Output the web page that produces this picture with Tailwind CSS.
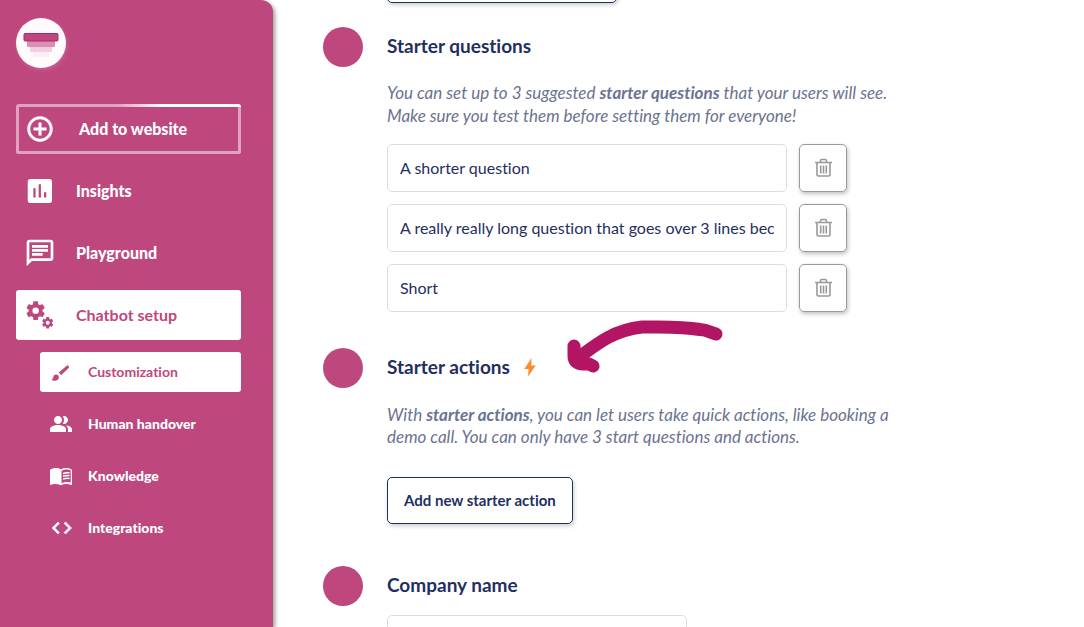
<!DOCTYPE html>
<html lang="en">
<head>
<meta charset="utf-8">
<meta name="viewport" content="width=device-width, initial-scale=1">
<title>Chatbot setup</title>
<script src="https://cdn.jsdelivr.net/npm/@tailwindcss/browser@4"></script>
</head>
<body class="bg-white font-['Lato',sans-serif] text-base text-[#1f2f5f] [font-variant-ligatures:none]">
<div class="flex h-screen overflow-hidden">
  <aside class="w-[273px] shrink-0 rounded-tr-xl bg-[#be477e] pt-[18px] pr-8 pl-4 text-white shadow-[2px_2px_4px_rgba(0,0,0,0.4)]">
    <a href="#" aria-label="Home" class="flex size-[50px] items-center justify-center rounded-full bg-[#fffafc] shadow-[1px_2px_4px_rgba(255,255,255,0.15)]">
      <svg class="size-[50px]" viewBox="0 0 50 50"><rect x="17" y="34" width="16" height="5" fill="#fceef5"/><rect x="14" y="28" width="22" height="6" rx="1" fill="#f0d0e0"/><rect x="11" y="22" width="28" height="7" rx="1" fill="#d990b4"/><rect x="8" y="15.500" width="34" height="7.500" rx="1" fill="#be477e" stroke="#b5256d"/></svg>
    </a>
    <nav class="mt-9 flex flex-col gap-3 font-black">
      <a href="#" class="rounded-[3px] bg-linear-to-r from-[#dfa3bf] from-45% via-white via-65% to-white p-[3px]">
        <span class="relative flex h-11 items-center bg-[#be477e] pl-1.5">
          <span class="absolute -inset-x-[3px] top-0 -bottom-[3px] rounded-b-[3px] border-x-3 border-b-3 border-[#dfa3bf]"></span>
          <svg class="size-[30px] fill-white stroke-white" stroke-width=".4" viewBox="0 0 24 24"><path d="M13 7h-2v4H7v2h4v4h2v-4h4v-2h-4V7zm-1-5C6.480 2 2 6.480 2 12s4.480 10 10 10 10-4.480 10-10S17.520 2 12 2zm0 18c-4.410 0-8-3.590-8-8s3.590-8 8-8 8 3.590 8 8-3.590 8-8 8z"/></svg>
          <span class="ml-6">Add to website</span>
        </span>
      </a>
      <a href="#" class="flex h-[50px] items-center gap-5 pl-2">
        <svg class="size-8 fill-white" viewBox="0 0 24 24"><path d="M19.200 3H4.800C3.600 3 2.800 3.800 2.800 4.800v14.400c0 1 .8 1.800 1.800 1.800h14.600c1 0 1.800-.8 1.800-1.800V4.800C21 3.800 20.200 3 19.200 3zM8.700 16.900H7V10h1.700v6.900zm4 0H11V7h1.700v9.900zm4 0H15V13h1.700v3.900z"/></svg>
        <span>Insights</span>
      </a>
      <a href="#" class="flex h-[50px] items-center gap-5 pl-2">
        <svg class="size-8 fill-white" viewBox="0 0 24 24"><path d="M4 4h16v12H5.170L4 17.170V4m0-2c-1.100 0-1.990.9-1.990 2L2 22l4-4h14c1.100 0 2-.9 2-2V4c0-1.100-.9-2-2-2H4zm2 10h8v2H6v-2zm0-3h12v2H6V9zm0-3h12v2H6V6z"/></svg>
        <span>Playground</span>
      </a>
      <a href="#" aria-current="true" class="flex h-[50px] items-center gap-5 rounded-[3px] bg-white pl-2 font-bold text-[#be477e]">
        <svg class="size-8 fill-[#be477e]" viewBox="0 0 32 32"><defs><path id="gear" fill-rule="evenodd" d="M19.140 12.940c.04-.3.060-.61.060-.94 0-.32-.02-.64-.07-.94l2.030-1.580c.18-.14.23-.41.120-.61l-1.920-3.320c-.12-.22-.37-.29-.59-.22l-2.390.96c-.5-.38-1.030-.7-1.620-.94l-.36-2.540c-.04-.24-.24-.41-.48-.41h-3.840c-.24 0-.43.17-.47.41l-.36 2.540c-.59.24-1.130.57-1.620.94l-2.390-.96c-.22-.08-.47 0-.59.22L2.740 8.870c-.12.21-.08.47.120.61l2.030 1.580c-.05.3-.09.63-.09.94s.02.64.070.94l-2.030 1.580c-.18.14-.23.41-.12.61l1.920 3.320c.12.22.37.29.59.22l2.390-.96c.5.38 1.030.7 1.620.94l.36 2.540c.05.24.24.41.48.41h3.840c.24 0 .44-.17.47-.41l.36-2.540c.59-.24 1.130-.56 1.620-.94l2.390.96c.22.080.47 0 .59-.22l1.920-3.320c.12-.22.070-.47-.12-.61l-2.010-1.580zM12 15.300a3.300 3.300 0 1 1 0-6.600 3.300 3.300 0 0 1 0 6.600z"/></defs><use href="#gear" transform="scale(.97)"/><use href="#gear" transform="translate(16.600 16.700) scale(.59)"/></svg>
        <span>Chatbot setup</span>
      </a>
      <div class="ml-6 flex flex-col gap-3 text-sm">
        <a href="#" aria-current="page" class="flex h-10 items-center gap-4 rounded-[3px] bg-white pl-2 font-bold text-[#be477e]">
          <svg class="size-6 fill-[#be477e]" viewBox="0 0 24 24"><path d="M8.200 14.500c-1.600 0-2.900 1.200-2.900 2.800 0 1.200-.9 2-1.800 2.200.8 1 2.200 1.300 3.200 1.300 2.400 0 4.200-1.500 4.200-3.600 0-1.500-1.200-2.700-2.700-2.700zM20.500 6c-.6-.6-1.500-.6-2.100 0L10.500 12.800c.9.3 2.100 1.400 2.500 2.500l7.700-7.200c.5-.6.4-1.600-.2-2.100z"/></svg>
          <span>Customization</span>
        </a>
        <a href="#" class="flex h-10 items-center gap-4 pl-2">
          <svg class="size-6 fill-white" viewBox="-1 0 24 24"><path d="M16.670 13.130C18.040 14.060 19 15.320 19 17v3h4v-3c0-2.180-3.570-3.470-6.330-3.870zM15 12c2.210 0 4-1.790 4-4s-1.790-4-4-4c-.47 0-.91.1-1.330.24C14.500 5.270 15 6.580 15 8s-.5 2.730-1.330 3.760c.42.14.86.24 1.330.24zM9 12c2.210 0 4-1.790 4-4s-1.790-4-4-4-4 1.790-4 4 1.790 4 4 4zm0 1c-2.670 0-8 1.340-8 4v3h16v-3c0-2.660-5.330-4-8-4z"/></svg>
          <span>Human handover</span>
        </a>
        <a href="#" class="flex h-10 items-center gap-4 pl-2">
          <svg class="size-6 fill-white" viewBox="-1 0 24 24"><path d="M1 6v14.500c0 .3.300.5.600.4C4 20 8 19.500 12 21.200c3-1.500 7-1.500 10.300-.2.400.2.700-.1.700-.4V6c-3-2.500-8-2.500-11-.6C9 3.500 4 3.500 1 6zm20.700 12.500c-3-1-6.500-.8-9.200.7V7c2.700-1.700 6.200-1.900 9.200-.7v12.200z"/><path fill="none" stroke="white" stroke-width="1.500" d="M14 9.500q3.200-1.200 6.500-.7M14 12.300q3.200-1.200 6.500-.7M14 15.100q3.200-1.200 6.500-.7"/></svg>
          <span>Knowledge</span>
        </a>
        <a href="#" class="flex h-10 items-center gap-4 pl-2">
          <svg class="size-6 fill-white stroke-white" stroke-width=".7" viewBox="-3 0 24 24"><path d="M8.400 16.600 3.800 12l4.600-4.600L7 6l-6 6 6 6 1.400-1.400zm4.700 0 4.600-4.600-4.600-4.600L14.500 6l6 6-6 6-1.400-1.400z"/></svg>
          <span>Integrations</span>
        </a>
      </div>
    </nav>
  </aside>

  <main class="min-w-0 flex-1 pr-8 pl-[50px]">
    <button type="button" aria-label="Add new starter question" class="-mt-[45px] ml-16 block h-12 w-[230px] rounded-[5px] border border-[#1f2f5f] shadow-[1px_2px_4px_rgba(0,0,0,0.2)]"></button>

    <section class="mt-6 grid grid-cols-[40px_minmax(0,1fr)] gap-x-6">
      <span class="size-10 rounded-full bg-[#be477e]"></span>
      <h2 class="flex h-10 items-center pb-0.5 text-[19px] font-bold">Starter questions</h2>
      <div class="col-start-2">
        <p class="mt-3.5 max-w-[510px] text-[17px] leading-[23px] text-[#6b7390] italic">You can set up to 3 suggested <b>starter questions</b> that your users will see. Make sure you test them before setting them for everyone!</p>
        <div class="mt-[17px] flex flex-col gap-3">
          <div class="flex gap-3">
            <input aria-label="Starter question 1" value="A shorter question" class="h-12 w-[400px] rounded-[5px] border border-[#dcdde8] px-3 pb-0.5">
            <button type="button" aria-label="Delete question 1" class="flex size-12 items-center justify-center rounded-[5px] border border-[#999] shadow-[1px_2px_4px_rgba(0,0,0,0.25)]"><svg class="size-5" viewBox="0 0 20 20" fill="none" stroke="#999" stroke-width="1.600"><path d="M2 4.500h17M7.500 4V2.800q0-1.300 1.300-1.300h3.400q1.300 0 1.300 1.300V4M4 4.500v12.200q0 1.300 1.300 1.300h10.400q1.300 0 1.300-1.300V4.500M7.700 7.500v8M10.500 7.500v8M13.300 7.500v8"/></svg></button>
          </div>
          <div class="flex gap-3">
            <input aria-label="Starter question 2" value="A really really long question that goes over 3 lines because it is long" class="h-12 w-[400px] rounded-[5px] border border-[#dcdde8] px-3 pb-0.5">
            <button type="button" aria-label="Delete question 2" class="flex size-12 items-center justify-center rounded-[5px] border border-[#999] shadow-[1px_2px_4px_rgba(0,0,0,0.25)]"><svg class="size-5" viewBox="0 0 20 20" fill="none" stroke="#999" stroke-width="1.600"><path d="M2 4.500h17M7.500 4V2.800q0-1.300 1.300-1.300h3.400q1.300 0 1.300 1.300V4M4 4.500v12.200q0 1.300 1.300 1.300h10.400q1.300 0 1.300-1.300V4.500M7.700 7.500v8M10.500 7.500v8M13.300 7.500v8"/></svg></button>
          </div>
          <div class="flex gap-3">
            <input aria-label="Starter question 3" value="Short" class="h-12 w-[400px] rounded-[5px] border border-[#dcdde8] px-3 pb-0.5">
            <button type="button" aria-label="Delete question 3" class="flex size-12 items-center justify-center rounded-[5px] border border-[#999] shadow-[1px_2px_4px_rgba(0,0,0,0.25)]"><svg class="size-5" viewBox="0 0 20 20" fill="none" stroke="#999" stroke-width="1.600"><path d="M2 4.500h17M7.500 4V2.800q0-1.300 1.300-1.300h3.400q1.300 0 1.300 1.300V4M4 4.500v12.200q0 1.300 1.300 1.300h10.400q1.300 0 1.300-1.300V4.500M7.700 7.500v8M10.500 7.500v8M13.300 7.500v8"/></svg></button>
          </div>
        </div>
      </div>
    </section>

    <section class="relative mt-9 grid grid-cols-[40px_minmax(0,1fr)] gap-x-6">
      <span class="size-10 rounded-full bg-[#be477e]"></span>
      <h2 class="flex h-10 items-center gap-3.5 pb-0.5 text-[19px] font-bold">Starter actions
        <svg class="h-5 w-3" viewBox="0 0 12 20"><path d="M7.500 1 .3 12h4.300L4 19.500 11.700 8.500H7.300z" fill="#ff8a2b"/></svg>
      </h2>
      <!-- Hand-drawn arrow pointing at the heading -->
      <svg class="absolute -top-[38px] left-[237px] h-[80px] w-[240px]" viewBox="0 0 240 80" fill="none" stroke="#b31565" stroke-width="13" stroke-linecap="round" stroke-linejoin="round"><path d="M156 24C149 22 148 20 140 19.500C120 16 100 17 82 17C55 20 39 32 18 48"/><path d="M14 36V46Q14 54 23 54H29L33 56"/></svg>
      <div class="col-start-2">
        <p class="mt-4 max-w-[510px] text-[17px] leading-[22px] text-[#6b7390] italic">With <b>starter actions</b>, you can let users take quick actions, like booking a demo call. You can only have 3 start questions and actions.</p>
        <button type="button" class="mt-[29px] h-[47px] rounded-[5px] border border-[#1f2f5f] px-4 text-[15px] font-bold shadow-[1px_2px_4px_rgba(0,0,0,0.2)]">Add new starter action</button>
      </div>
    </section>

    <section class="mt-[42px] grid grid-cols-[40px_minmax(0,1fr)] gap-x-6">
      <span class="size-10 rounded-full bg-[#be477e]"></span>
      <h2 class="flex h-10 items-center pb-0.5 text-[19px] font-bold"><label for="company">Company name</label></h2>
      <input id="company" class="col-start-2 mt-[9px] h-12 w-[300px] rounded-[5px] border border-[#dcdde8] px-3">
    </section>
  </main>
</div>
</body>
</html>
